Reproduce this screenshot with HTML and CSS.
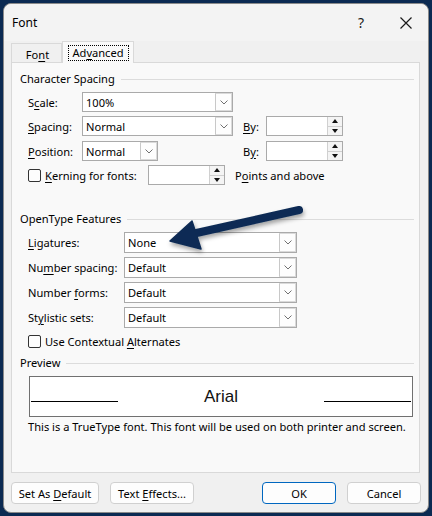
FILE: index.html
```html
<!DOCTYPE html>
<html lang="en">
<head>
  <meta charset="UTF-8">
  <title>Font</title>
  <link rel="stylesheet" href="styles.css">
</head>
<body>
  <div class="dialog">
    <div class="titlebar">
      <span class="title">Font</span>
      <span class="help">?</span>
      <span class="close">
        <svg width="12" height="12" viewBox="0 0 12 12"><path d="M0.5 0.5 L11.5 11.5 M11.5 0.5 L0.5 11.5" stroke="#1a1a1a" stroke-width="1.2" fill="none"/></svg>
      </span>
    </div>

    <div class="tabs">
      <div class="tab">Fo<u>n</u>t</div>
      <div class="tab active"><span class="focus">Ad<u>v</u>anced</span></div>
    </div>

    <div class="panel">
      <div class="group-title first"><span>Character Spacing</span></div>

      <div class="row mt5">
        <span class="label">S<u>c</u>ale:</span>
        <div class="combo w151"><span class="value">100%</span><span class="drop"></span></div>
      </div>
      <div class="row mt4">
        <span class="label"><u>S</u>pacing:</span>
        <div class="cell">
          <div class="combo w151"><span class="value">Normal</span><span class="drop"></span></div>
        </div>
        <span class="by"><u>B</u>y:</span>
        <div class="spin"><span class="arrows"><i class="up"></i><i class="down"></i></span></div>
      </div>
      <div class="row mt5">
        <span class="label"><u>P</u>osition:</span>
        <div class="cell">
          <div class="combo w76"><span class="value">Normal</span><span class="drop"></span></div>
        </div>
        <span class="by">B<u>y</u>:</span>
        <div class="spin"><span class="arrows"><i class="up"></i><i class="down"></i></span></div>
      </div>
      <div class="row mt4">
        <span class="check"></span>
        <span class="check-label kern"><u>K</u>erning for fonts:</span>
        <div class="spin"><span class="arrows"><i class="up"></i><i class="down"></i></span></div>
        <span class="after">P<u>o</u>ints and above</span>
      </div>

      <div class="group-title second"><span>OpenType Features</span></div>

      <div class="row tall mt5">
        <span class="label wide-label"><u>L</u>igatures:</span>
        <div class="combo w173"><span class="value">None</span><span class="drop"></span></div>
      </div>
      <div class="row tall mt4">
        <span class="label wide-label">Nu<u>m</u>ber spacing:</span>
        <div class="combo w173"><span class="value">Default</span><span class="drop"></span></div>
      </div>
      <div class="row tall mt4">
        <span class="label wide-label">Number <u>f</u>orms:</span>
        <div class="combo w173"><span class="value">Default</span><span class="drop"></span></div>
      </div>
      <div class="row tall mt4">
        <span class="label wide-label">St<u>y</u>listic sets:</span>
        <div class="combo w173"><span class="value">Default</span><span class="drop"></span></div>
      </div>
      <div class="row short mt5">
        <span class="check"></span>
        <span class="check-label">Use Contextual <u>A</u>lternates</span>
      </div>

      <div class="group-title third"><span>Preview</span></div>

      <div class="preview">
        <span class="rule"></span>
        <span class="sample">Arial</span>
        <span class="rule"></span>
      </div>
      <p class="note">This is a TrueType font. This font will be used on both printer and screen.</p>
    </div>

    <div class="footer">
      <button class="btn w88">Set As <u>D</u>efault</button>
      <button class="btn w84">Text <u>E</u>ffects...</button>
      <span class="spacer"></span>
      <button class="btn w74 primary">OK</button>
      <button class="btn w74">Cancel</button>
    </div>
  </div>

  <svg class="callout" width="432" height="516" viewBox="0 0 432 516">
    <defs>
      <filter id="shadow" x="-20%" y="-40%" width="140%" height="180%">
        <feDropShadow dx="1" dy="3" stdDeviation="2" flood-color="#000" flood-opacity="0.35"/>
      </filter>
    </defs>
    <g filter="url(#shadow)" fill="#0c2b54" stroke="#0c2b54">
      <line x1="192" y1="234" x2="299" y2="210" stroke-width="8" stroke-linecap="round"/>
      <polygon points="170,241 192,221 201,249" stroke-width="1.5" stroke-linejoin="round"/>
    </g>
  </svg>
</body>
</html>
```

FILE: styles.css
```css
* {
  box-sizing: border-box;
}

html, body {
  margin: 0;
  height: 100%;
}

body {
  background: #0b2a52;
  padding: 3px 4px 0 3px;
  font-family: "Segoe UI", "Noto Sans", sans-serif;
  font-size: 11.1px;
  color: #000;
  position: relative;
  white-space: nowrap;
}

u {
  text-decoration-thickness: 1px;
  text-underline-offset: 2px;
}

.dialog {
  width: 426px;
  height: 510px;
  background: #f0f0f0;
  border: 1px solid #8a8a8a;
  border-radius: 8px;
  display: flex;
  flex-direction: column;
}

/* title bar */
.titlebar {
  height: 37px;
  display: flex;
  align-items: center;
  padding-left: 8px;
  border-radius: 8px 8px 0 0;
  background: #f3f3f3;
}

.title {
  flex: 1;
  font-size: 12px;
}

.help {
  width: 14px;
  margin-right: 32px;
  font-size: 14px;
  text-align: center;
  color: #1a1a1a;
}

.close {
  width: 12px;
  height: 12px;
  margin-right: 16px;
  margin-top: 1px;
  display: flex;
}

/* tabs */
.tabs {
  height: 21px;
  display: flex;
  align-items: flex-end;
  padding-left: 7px;
  position: relative;
  z-index: 1;
}

.tab {
  width: 51px;
  height: 19px;
  display: flex;
  align-items: center;
  justify-content: center;
  padding-top: 2px;
  padding-left: 2px;
  border: 1px solid #d9d9d9;
  border-bottom: none;
  background: #f0f0f0;
}

.tab.active {
  width: 72px;
  height: 22px;
  margin-bottom: -1px;
  padding: 0;
  background: #f9f9f9;
}

.focus {
  width: 61px;
  height: 16px;
  display: flex;
  align-items: center;
  justify-content: center;
  border: 1px dotted #000;
}

/* panel */
.panel {
  height: 411px;
  margin: 0 8px 0 7px;
  padding: 0 5px 0 16px;
  background: #f9f9f9;
  border: 1px solid #d9d9d9;
}

.group-title {
  height: 16px;
  margin-left: -8px;
  display: flex;
  align-items: center;
  gap: 6px;
  line-height: 16px;
}

.group-title::after {
  content: "";
  flex: 1;
  border-top: 1px solid #dcdcdc;
}

.group-title.first { margin-top: 8px; }
.group-title.second { margin-top: 26px; }
.group-title.third { margin-top: 6px; }

.row {
  height: 20px;
  display: flex;
  align-items: center;
}

.row.tall { height: 21px; }
.row.short { height: 16px; }

.mt4 { margin-top: 4px; }
.mt5 { margin-top: 5px; }

.label {
  width: 54px;
  flex: none;
}

.label.wide-label {
  width: 96px;
}

.cell {
  width: 161px;
  flex: none;
}

/* combo box */
.combo {
  height: 20px;
  display: flex;
  align-items: stretch;
  background: #fff;
  border: 1px solid #aaaaaa;
}

.row.tall .combo { height: 21px; }

.w151 { width: 151px; }
.w76 { width: 76px; }
.w173 { width: 173px; }

.combo .value {
  flex: 1;
  display: flex;
  align-items: center;
  padding-left: 3px;
}

.drop {
  width: 17px;
  border: 1px solid #dadada;
  border-left-color: #c8c8c8;
  background: #fdfdfd url("data:image/svg+xml,%3Csvg xmlns='http://www.w3.org/2000/svg' width='8' height='5'%3E%3Cpath d='M0.5 0.5 L4 4 L7.5 0.5' stroke='%23707070' fill='none'/%3E%3C/svg%3E") no-repeat center;
}

/* spin box */
.by {
  width: 23px;
  flex: none;
}

.spin {
  width: 77px;
  height: 20px;
  flex: none;
  display: flex;
  justify-content: flex-end;
  background: #fff;
  border: 1px solid #aaaaaa;
}

.arrows {
  width: 15px;
  display: flex;
  flex-direction: column;
  border-left: 1px solid #d0d0d0;
  background: #f4f4f4;
}

.arrows i {
  flex: 1;
  display: flex;
  align-items: center;
  justify-content: center;
}

.arrows i.up {
  border-bottom: 1px solid #cfcfcf;
}

.arrows i::before {
  content: "";
  border-left: 3px solid transparent;
  border-right: 3px solid transparent;
}

.arrows i.up::before { border-bottom: 4px solid #111; }
.arrows i.down::before { border-top: 4px solid #111; }

/* check boxes */
.check {
  width: 13px;
  height: 13px;
  flex: none;
  border: 1px solid #333;
  border-radius: 2px;
  background: #fdfdfd;
}

.check-label {
  margin-left: 4px;
}

.check-label.kern {
  width: 103px;
  flex: none;
}

.after {
  margin-left: 10px;
}

/* preview */
.preview {
  width: 384px;
  height: 41px;
  margin: 5px 0 0 1px;
  display: flex;
  align-items: flex-end;
  padding: 0 1px 14px;
  background: #fff;
  border: 1px solid #707070;
}

.rule {
  width: 87px;
  border-top: 1px solid #000;
}

.sample {
  flex: 1;
  text-align: center;
  font-family: "Liberation Sans", Arial, sans-serif;
  font-size: 17px;
  line-height: 13px;
  color: #111;
  position: relative;
  top: 1px;
}

.note {
  margin: 2px 0 0;
  line-height: 16px;
}

/* footer */
.footer {
  display: flex;
  gap: 11px;
  margin: 9px 7px 0 7px;
}

.spacer {
  flex: 1;
}

.btn {
  height: 22px;
  padding: 0;
  font: inherit;
  color: #000;
  background: #fdfdfd;
  border: 1px solid #d0d0d0;
  border-radius: 4px;
}

.btn.primary {
  border-color: #0067c0;
}

.w88 { width: 88px; }
.w84 { width: 84px; }
.w74 { width: 74px; }

/* annotation arrow */
.callout {
  position: absolute;
  left: 0;
  top: 0;
  pointer-events: none;
}
```
